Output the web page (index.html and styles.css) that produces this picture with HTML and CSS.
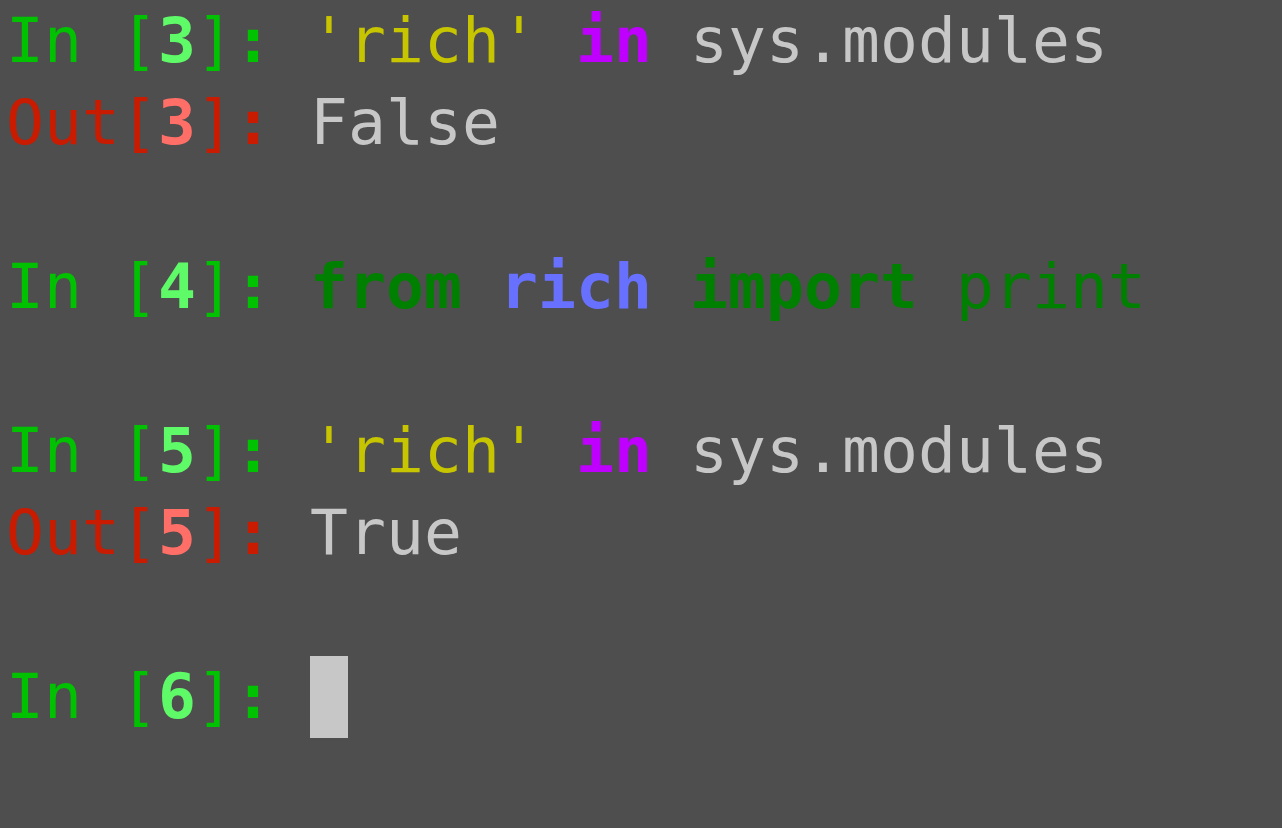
FILE: index.html
```html
<!DOCTYPE html>
<html>
<head>
<meta charset="utf-8">
<link rel="stylesheet" href="styles.css">
</head>
<body>
<div class="term">
<div class="line"><span class="g">In [</span><span class="bg b">3</span><span class="g">]</span><span class="g b">:</span> <span class="str">'rich'</span> <span class="kw b">in</span> <span class="w">sys.modules</span></div>
<div class="line"><span class="r">Out[</span><span class="br b">3</span><span class="r">]</span><span class="r b">:</span> <span class="w">False</span></div>
<div class="line"> </div>
<div class="line"><span class="g">In [</span><span class="bg b">4</span><span class="g">]</span><span class="g b">:</span> <span class="dg b">from</span> <span class="bl b">rich</span> <span class="dg b">import</span> <span class="dg">print</span></div>
<div class="line"> </div>
<div class="line"><span class="g">In [</span><span class="bg b">5</span><span class="g">]</span><span class="g b">:</span> <span class="str">'rich'</span> <span class="kw b">in</span> <span class="w">sys.modules</span></div>
<div class="line"><span class="r">Out[</span><span class="br b">5</span><span class="r">]</span><span class="r b">:</span> <span class="w">True</span></div>
<div class="line"> </div>
<div class="line"><span class="g">In [</span><span class="bg b">6</span><span class="g">]</span><span class="g b">:</span> <span class="cursor"></span></div>
</div>
</body>
</html>
```
FILE: styles.css
```css
html, body {
  margin: 0;
  padding: 0;
  background: #4e4e4e;
  width: 1282px;
  height: 828px;
  overflow: hidden;
}
.term {
  padding-left: 6px;
  font-family: "DejaVu Sans Mono", monospace;
  font-size: 63px;
  letter-spacing: 0.07px;
  line-height: 82px;
  color: #c7c7c7;
}
.line {
  white-space: pre;
  height: 82px;
}
.b { font-weight: bold; }
.g { color: #00c200; }
.bg { color: #5ffa68; }
.r { color: #c91b00; }
.br { color: #ff6e67; }
.str { color: #c7c400; }
.kw { color: #bf00ff; }
.w { color: #c7c7c7; }
.dg { color: #008000; }
.bl { color: #6871ff; }
.cursor {
  display: inline-block;
  width: 38px;
  height: 82px;
  vertical-align: top;
  background: #c7c7c7;
}
```
